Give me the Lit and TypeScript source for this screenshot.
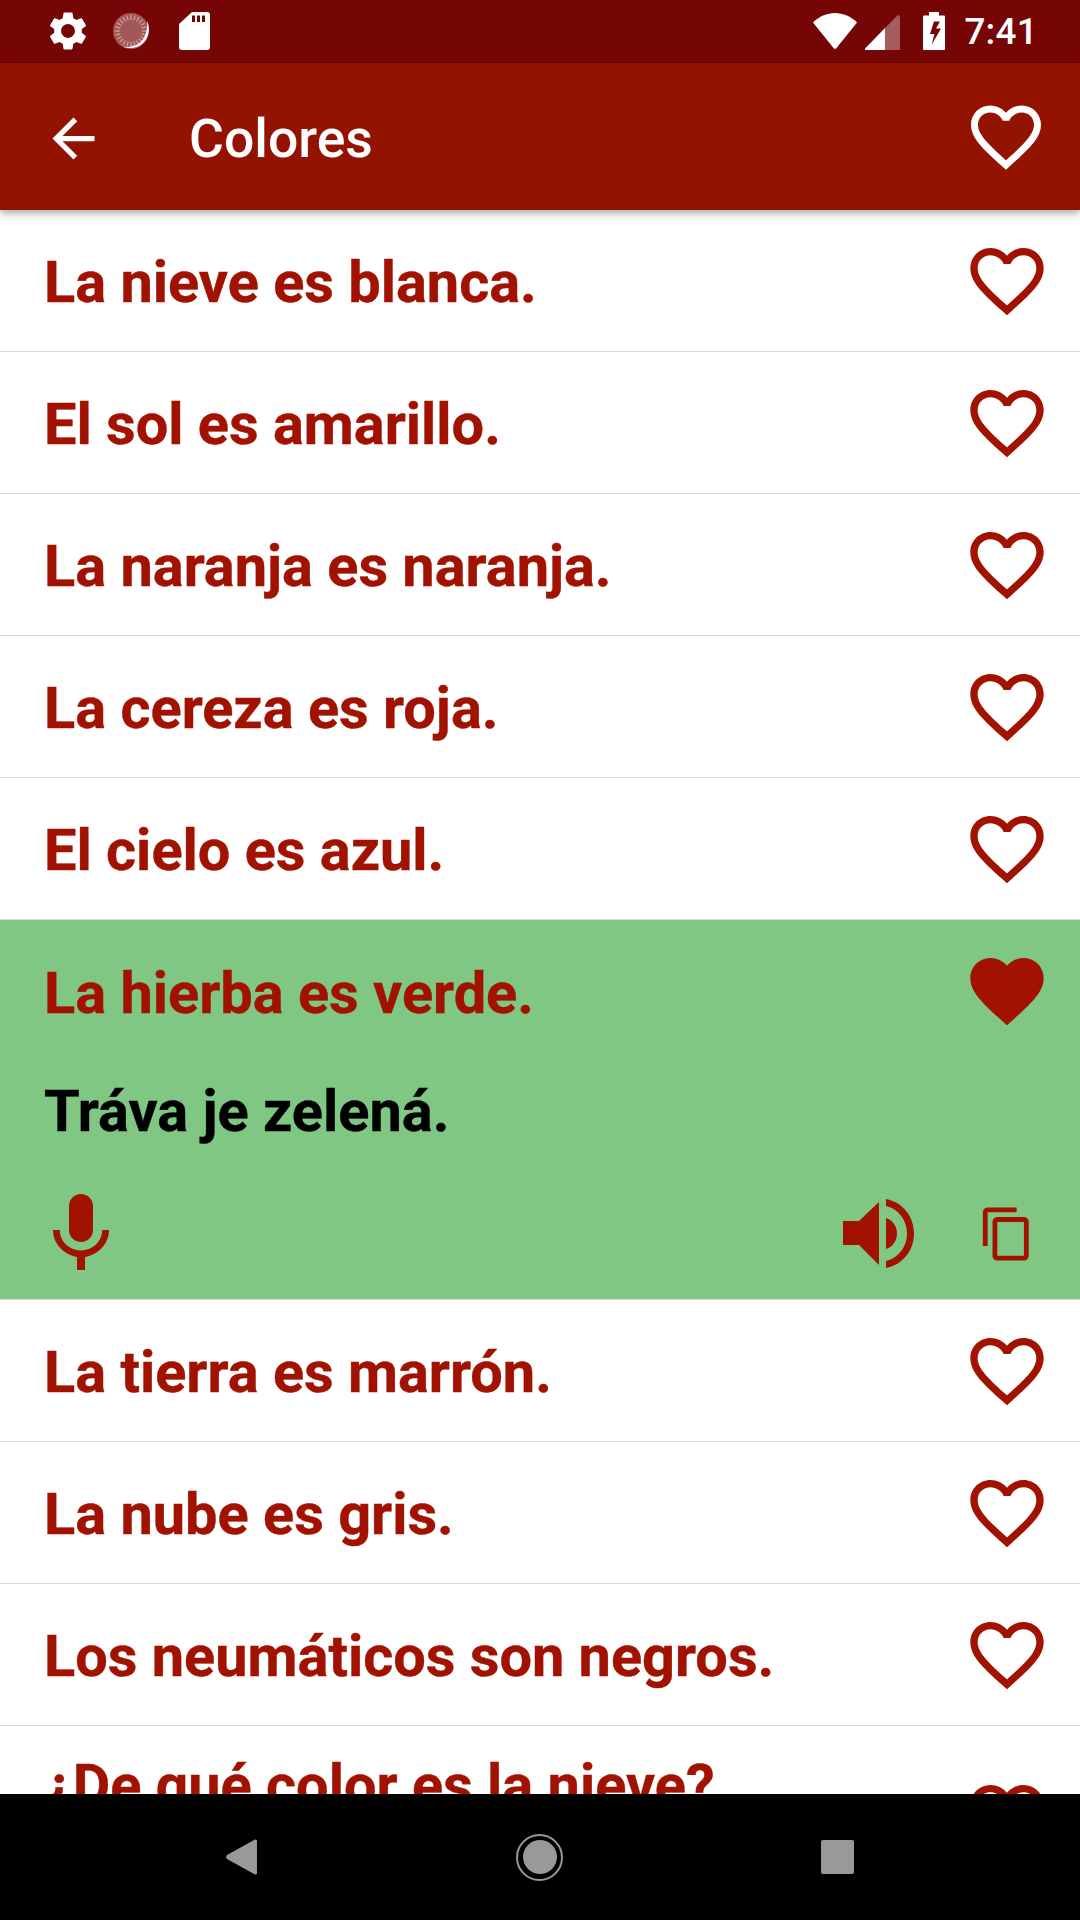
import { LitElement, html, css, svg } from "lit";
import { customElement } from "lit/decorators.js";

const HEART_O = "M16.5 3c-1.74 0-3.41.81-4.5 2.09C10.91 3.81 9.24 3 7.5 3 4.42 3 2 5.42 2 8.5c0 3.78 3.4 6.86 8.55 11.54L12 21.35l1.45-1.32C18.6 15.36 22 12.28 22 8.5 22 5.42 19.58 3 16.5 3zm-4.4 15.55l-.1.1-.1-.1C7.14 14.24 4 11.39 4 8.5 4 6.5 5.5 5 7.5 5c1.54 0 3.04.99 3.57 2.36h1.87C13.46 5.99 14.96 5 16.5 5c2 0 3.5 1.5 3.5 3.5 0 2.89-3.14 5.74-7.9 10.05z";
const HEART_F = "M12 21.35l-1.45-1.32C5.4 15.36 2 12.28 2 8.5 2 5.42 4.42 3 7.5 3c1.74 0 3.41.81 4.5 2.09C13.09 3.81 14.76 3 16.5 3 19.58 3 22 5.42 22 8.5c0 3.78-3.4 6.86-8.55 11.54L12 21.35z";
const GEAR = "M19.14 12.94c.04-.3.06-.61.06-.94 0-.32-.02-.64-.07-.94l2.03-1.58c.18-.14.23-.41.12-.61l-1.92-3.32c-.12-.22-.37-.29-.59-.22l-2.39.96c-.5-.38-1.03-.7-1.62-.94l-.36-2.54c-.04-.24-.24-.41-.48-.41h-3.84c-.24 0-.43.17-.47.41l-.36 2.54c-.59.24-1.13.57-1.62.94l-2.39-.96c-.22-.08-.47 0-.59.22L2.74 8.87c-.12.21-.08.47.12.61l2.03 1.58c-.05.3-.09.63-.09.94s.02.64.07.94l-2.03 1.58c-.18.14-.23.41-.12.61l1.92 3.32c.12.22.37.29.59.22l2.39-.96c.5.38 1.03.7 1.62.94l.36 2.54c.05.24.24.41.48.41h3.84c.24 0 .44-.17.47-.41l.36-2.54c.59-.24 1.13-.56 1.62-.94l2.39.96c.22.08.47 0 .59-.22l1.92-3.32c.12-.22.07-.47-.12-.61l-2.01-1.58zM12 15.6c-1.98 0-3.6-1.62-3.6-3.6s1.62-3.6 3.6-3.6 3.6 1.62 3.6 3.6-1.62 3.6-3.6 3.6z";
const MIC = "M12 14c1.66 0 2.99-1.34 2.99-3L15 5c0-1.66-1.34-3-3-3S9 3.34 9 5v6c0 1.66 1.34 3 3 3zm5.3-3c0 3-2.54 5.1-5.3 5.1S6.7 14 6.7 11H5c0 3.41 2.72 6.23 6 6.72V21h2v-3.28c3.28-.48 6-3.3 6-6.72h-1.7z";
const COPY = "M16 1H4c-1.1 0-2 .9-2 2v14h2V3h12V1zm3 4H8c-1.1 0-2 .9-2 2v14c0 1.1.9 2 2 2h11c1.1 0 2-.9 2-2V7c0-1.1-.9-2-2-2zm0 16H8V7h11v14z";
const BACK = "M20 11H7.83l5.59-5.59L12 4l-8 8 8 8 1.41-1.41L7.83 13H20v-2z";

const before = ["La nieve es blanca.", "El sol es amarillo.", "La naranja es naranja.", "La cereza es roja.", "El cielo es azul."];
const after = ["La tierra es marrón.", "La nube es gris.", "Los neumáticos son negros."];

const ticks = Array.from({ length: 24 }, (_, i) => {
  const a = (i / 24) * Math.PI * 2;
  const x1 = 19 + Math.cos(a) * 11, y1 = 19 + Math.sin(a) * 11;
  const x2 = 19 + Math.cos(a) * 16, y2 = 19 + Math.sin(a) * 16;
  return svg`<line x1=${x1} y1=${y1} x2=${x2} y2=${y2} stroke="#fff" stroke-opacity=".45" stroke-width="1.2"></line>`;
});

const icon = (d: string, cls: string) => html`<svg class=${cls} viewBox="0 0 24 24"><path d=${d}></path></svg>`;

@customElement("app-root")
export class AppRoot extends LitElement {
  static styles = css`
    :host { display: block; width: 1080px; height: 1920px; font-family: Roboto, "Liberation Sans", sans-serif; }
    .page { width: 1080px; height: 1920px; display: flex; flex-direction: column; overflow: hidden; background: #fff; }
    svg { display: block; flex: none; }

    .status { height: 63px; flex: none; background: #760505; display: flex; align-items: flex-start; color: #fff; fill: #fff; }
    .gear { width: 46px; height: 46px; margin: 8px 0 0 45px; }
    .sync { width: 38px; height: 38px; margin: 12px 0 0 21px; }
    .sd { width: 31px; height: 38px; margin: 12px 0 0 29px; }
    .status-spacer { flex: 1; }
    .wifi { width: 44px; height: 36px; margin: 13px 0 0 0; }
    .signal { width: 35px; height: 35px; margin: 15px 0 0 8px; }
    .battery { width: 22px; height: 38px; margin: 12px 0 0 23px; }
    .time { font-size: 36.75px; font-weight: 500; line-height: 63px; margin: 0 42px 0 19px; letter-spacing: 0.3px; }

    .appbar { height: 147px; flex: none; background: #941200; display: flex; align-items: center; box-shadow: 0 3px 8px rgba(0,0,0,.35); position: relative; z-index: 1; fill: #fff; color: #fff; }
    .back { width: 63px; height: 63px; margin: 3px 0 0 42px; }
    .title { flex: 1; font-size: 53.5px; font-weight: 500; margin: 3px 0 0 84px; }
    .bar-heart { width: 84px; height: 84px; margin: 0 32px 0 0; }

    .list { flex: 1; min-height: 0; overflow: hidden; }
    .row { height: 142px; box-sizing: border-box; display: flex; align-items: center; padding: 0 29px 0 45px; border-bottom: 1px solid #d8d8d8; }
    .row.tall { height: 184px; }
    .phrase { flex: 1; font-size: 57.7px; font-weight: 700; color: #a11200; -webkit-text-stroke: 0.4px #a11200; white-space: nowrap; margin-left: -1px; padding-top: 3px; }
    .tall .phrase { line-height: 67px; margin-top: -67px; }
    .heart { width: 88px; height: 88px; fill: #a11200; }

    .open { height: 380px; box-sizing: border-box; background: #81c784; border-bottom: 1px solid #d8d8d8; display: flex; flex-direction: column; }
    .open .row { border-bottom: 0; height: 142px; flex: none; }
    .open .phrase { padding-top: 4px; }
    .translation { height: 96px; margin: 1px 0 9px; flex: none; padding-left: 44px; font-size: 57.7px; font-weight: 700; -webkit-text-stroke: 0.4px #000; color: #000; line-height: 96px; }
    .actions { flex: 1; display: flex; align-items: center; fill: #a11200; }
    .mic { width: 96px; height: 96px; margin-left: 33px; }
    .spacer { flex: 1; }
    .speaker { width: 72px; height: 70px; }
    .copy { width: 58px; height: 58px; margin: 0 44px 0 63px; }

    .nav { height: 126px; flex: none; background: #000; display: flex; align-items: center; position: relative; z-index: 1; }
    .tri { width: 31px; height: 36px; margin-left: 226px; fill: #999; }
    .home { width: 47px; height: 47px; margin-left: 259px; box-sizing: border-box; border: 2.5px solid #999; border-radius: 50%; display: flex; align-items: center; justify-content: center; }
    .home i { display: block; width: 34px; height: 34px; border-radius: 50%; background: #999; }
    .square { width: 33px; height: 34px; margin-left: 258px; background: #999; border-radius: 2px; }
  `;

  render() {
    const row = (t: string) => html`<div class="row"><div class="phrase">${t}</div>${icon(HEART_O, "heart")}</div>`;
    return html`<div class="page">
      <div class="status">
        ${icon(GEAR, "gear")}
        <svg class="sync" viewBox="0 0 38 38">
          <circle cx="19" cy="19" r="18" fill="#fff" fill-opacity=".33"></circle>
          ${ticks}
          <path d="M35 9C37.500 13 38.500 24 31 31C26 36 18 37.500 11 34.500C19 36 27 33 31 27.500C34 23 36 15 35 9Z"></path>
        </svg>
        <svg class="sd" viewBox="0 0 31 38"><path fill-rule="evenodd" d="M13 0H28a3 3 0 0 1 3 3V35a3 3 0 0 1-3 3H3a3 3 0 0 1-3-3V12ZM13 3.500V10H16V3.500ZM18 3.500V10H21V3.500ZM23 3.500V10H26V3.500Z"></path></svg>
        <div class="status-spacer"></div>
        <svg class="wifi" viewBox="0 0 44 36"><path d="M0 9.500C6 3.500 14 0 22 0S38 3.500 44 9.500L23.500 35a2 2 0 0 1-3 0Z"></path></svg>
        <svg class="signal" viewBox="0 0 35 35"><path d="M33 0a2 2 0 0 1 2 2V35H20V13Z" fill-opacity=".35"></path><path d="M20 13V35H1a1 1 0 0 1-.7-1.700Z"></path></svg>
        <svg class="battery" viewBox="0 0 22 38"><path fill-rule="evenodd" d="M6 0H16V3.500H21a1 1 0 0 1 1 1V37a1 1 0 0 1-1 1H1a1 1 0 0 1-1-1V4.500a1 1 0 0 1 1-1H6ZM11 9.500L7 22H11.500L8.500 33L18 16.500H13L17 9.500Z"></path></svg>
        <div class="time">7:41</div>
      </div>
      <div class="appbar">
        ${icon(BACK, "back")}
        <div class="title">Colores</div>
        ${icon(HEART_O, "bar-heart")}
      </div>
      <div class="list">
        ${before.map(row)}
        <div class="open">
          <div class="row"><div class="phrase">La hierba es verde.</div>${icon(HEART_F, "heart")}</div>
          <div class="translation">Tráva je zelená.</div>
          <div class="actions">
            ${icon(MIC, "mic")}
            <div class="spacer"></div>
            <svg class="speaker" viewBox="0 0 72 70">
              <path d="M0 22H16L36 3V66L16 46H0Z"></path>
              <path d="M43 19C50 21 54 28 54 34.500C54 41 50 48 43 50Z"></path>
              <path d="M43 0C60 3 71 18 71 34.500C71 51 60 66 43 69V62C56 59 64 47 64 34.500C64 22 56 10 43 7Z"></path>
            </svg>
            ${icon(COPY, "copy")}
          </div>
        </div>
        ${after.map(row)}
        <div class="row tall"><div class="phrase">¿De qué color es la nieve?</div>${icon(HEART_O, "heart")}</div>
      </div>
      <div class="nav">
        <svg class="tri" viewBox="0 0 31 36"><path d="M29 .5a1.500 1.500 0 0 1 2 1.500V34a1.500 1.500 0 0 1-2 1.500L1 20a3 3 0 0 1 0-4Z"></path></svg>
        <div class="home"><i></i></div>
        <div class="square"></div>
      </div>
    </div>`;
  }
}
